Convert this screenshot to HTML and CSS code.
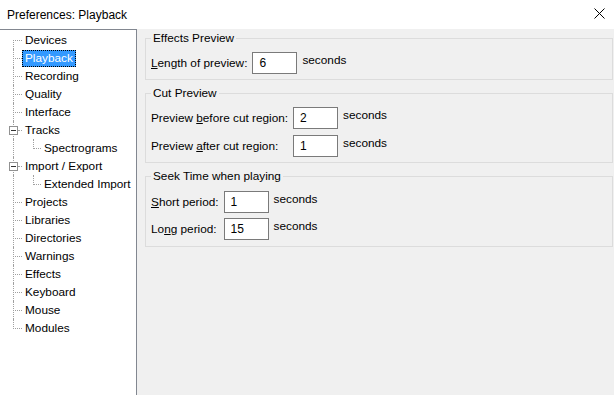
FILE: index.html
```html
<!DOCTYPE html>
<html>
	<head>
		<meta charset="utf-8" />
		<title>Preferences: Playback</title>
		<link rel="stylesheet" href="styles.css">
	</head>
	<body>
		<div class="window">
			<div class="titlebar">
				<span class="title">Preferences: Playback</span>
				<svg class="close" width="11" height="11" viewBox="0 0 11 11">
					<path d="M0.5 0.5 L10.5 10.5 M10.5 0.5 L0.5 10.5" stroke="#000" stroke-width="1" fill="none"/>
				</svg>
			</div>
			<div class="body">
				<ul class="tree">
					<li class="first"><span class="label">Devices</span></li>
					<li><span class="label selected">Playback</span></li>
					<li><span class="label">Recording</span></li>
					<li><span class="label">Quality</span></li>
					<li><span class="label">Interface</span></li>
					<li class="parent"><span class="toggle"></span><span class="label">Tracks</span></li>
					<li class="child"><span class="elbow"></span><span class="label">Spectrograms</span></li>
					<li class="parent"><span class="toggle"></span><span class="label">Import / Export</span></li>
					<li class="child"><span class="elbow"></span><span class="label">Extended Import</span></li>
					<li><span class="label">Projects</span></li>
					<li><span class="label">Libraries</span></li>
					<li><span class="label">Directories</span></li>
					<li><span class="label">Warnings</span></li>
					<li><span class="label">Effects</span></li>
					<li><span class="label">Keyboard</span></li>
					<li><span class="label">Mouse</span></li>
					<li class="last"><span class="label">Modules</span></li>
				</ul>
				<div class="pane">
					<fieldset class="group">
						<legend>Effects Preview</legend>
						<div class="rows">
							<label><u>L</u>ength of preview:</label>
							<input type="text" value="6">
							<span class="unit">seconds</span>
						</div>
					</fieldset>
					<fieldset class="group">
						<legend>Cut Preview</legend>
						<div class="rows">
							<label>Preview <u>b</u>efore cut region:</label>
							<input type="text" value="2">
							<span class="unit">seconds</span>
							<label>Preview <u>a</u>fter cut region:</label>
							<input type="text" value="1">
							<span class="unit">seconds</span>
						</div>
					</fieldset>
					<fieldset class="group seek">
						<legend>Seek Time when playing</legend>
						<div class="rows">
							<label><u>S</u>hort period:</label>
							<input type="text" value="1">
							<span class="unit">seconds</span>
							<label>Lo<u>n</u>g period:</label>
							<input type="text" value="15">
							<span class="unit">seconds</span>
						</div>
					</fieldset>
				</div>
			</div>
		</div>
	</body>
</html>
```

FILE: styles.css
```css
*{
	box-sizing: border-box;
}
body{
	margin: 0;
	font-family: "Liberation Sans", Arial, sans-serif;
	font-size: 11.8px;
	color: #000;
	background: #f0f0f0;
}
.window{
	width: 614px;
	height: 395px;
	display: flex;
	flex-direction: column;
	overflow: hidden;
}
/*title*/
.titlebar{
	height: 29px;
	flex: none;
	display: flex;
	align-items: center;
	justify-content: space-between;
	padding: 0 9px 0 7px;
	background: #fff;
	font-size: 12px;
}
.close{
	display: block;
	margin-top: -2px;
}
.body{
	flex: 1;
	display: flex;
	min-height: 0;
}
/*tree*/
.tree{
	width: 137px;
	flex: none;
	margin: 0;
	padding: 0;
	list-style: none;
	background: #fff;
	border-top: 1px solid #828790;
	border-right: 1px solid #828790;
}
.tree li{
	position: relative;
	height: 18px;
	padding-left: 22px;
}
.tree li:first-child{
	margin-top: 1px;
}
.tree li::before{
	content: "";
	position: absolute;
	left: 13px;
	top: 0;
	height: 18px;
	border-left: 1px dotted #a0a0a0;
}
.tree li.first::before{
	top: 9px;
	height: 9px;
}
.tree li.last::before{
	height: 10px;
}
.tree li::after{
	content: "";
	position: absolute;
	left: 15px;
	top: 9px;
	width: 7px;
	border-top: 1px dotted #a0a0a0;
}
.tree li.parent::after{
	left: 18px;
	width: 4px;
}
.tree li.child{
	padding-left: 41px;
}
.tree li.child::after{
	display: none;
}
.label{
	display: block;
	float: left;
	height: 17px;
	margin-top: 1px;
	padding: 0 2px;
	border: 1px dotted transparent;
	line-height: 14px;
	white-space: nowrap;
}
.label.selected{
	background: #3399ff;
	color: #fff;
	border-color: #000;
}
.toggle{
	position: absolute;
	left: 9px;
	top: 5px;
	width: 9px;
	height: 9px;
	border: 1px solid #919191;
	background: #fff;
	z-index: 1;
}
.toggle::after{
	content: "";
	position: absolute;
	left: 1px;
	top: 3px;
	width: 5px;
	height: 1px;
	background: #333;
}
.elbow{
	position: absolute;
	left: 33px;
	top: 0;
	width: 8px;
	height: 10px;
	border-left: 1px dotted #a0a0a0;
	border-bottom: 1px dotted #a0a0a0;
}
/*pane*/
.pane{
	flex: 1;
	padding: 2px 1px 0 8px;
	display: flex;
	flex-direction: column;
	gap: 6px;
}
.group{
	margin: 0;
	padding: 0 5px 5px;
	border: 1px solid #dcdcdc;
	min-width: 0;
}
.group legend{
	padding: 0 2px;
	line-height: 14px;
}
.rows{
	margin-top: 7px;
	display: grid;
	grid-template-columns: auto 45px auto 1fr;
	column-gap: 5px;
	row-gap: 6px;
	align-items: center;
}
.seek .rows{
	margin-top: 8px;
	row-gap: 5px;
}
.seek{
	padding-bottom: 6px;
}
.rows label{
	grid-column: 1;
	white-space: nowrap;
}
.rows input{
	grid-column: 2;
	width: 45px;
	height: 22px;
	margin: 0;
	padding: 0 0 0 6px;
	border: 1px solid #7a7a7a;
	background: #fff;
	font: inherit;
	font-size: 12px;
	color: #000;
	outline: none;
}
.unit{
	grid-column: 3;
	align-self: start;
	line-height: 15px;
	margin-top: 1px;
}
```
